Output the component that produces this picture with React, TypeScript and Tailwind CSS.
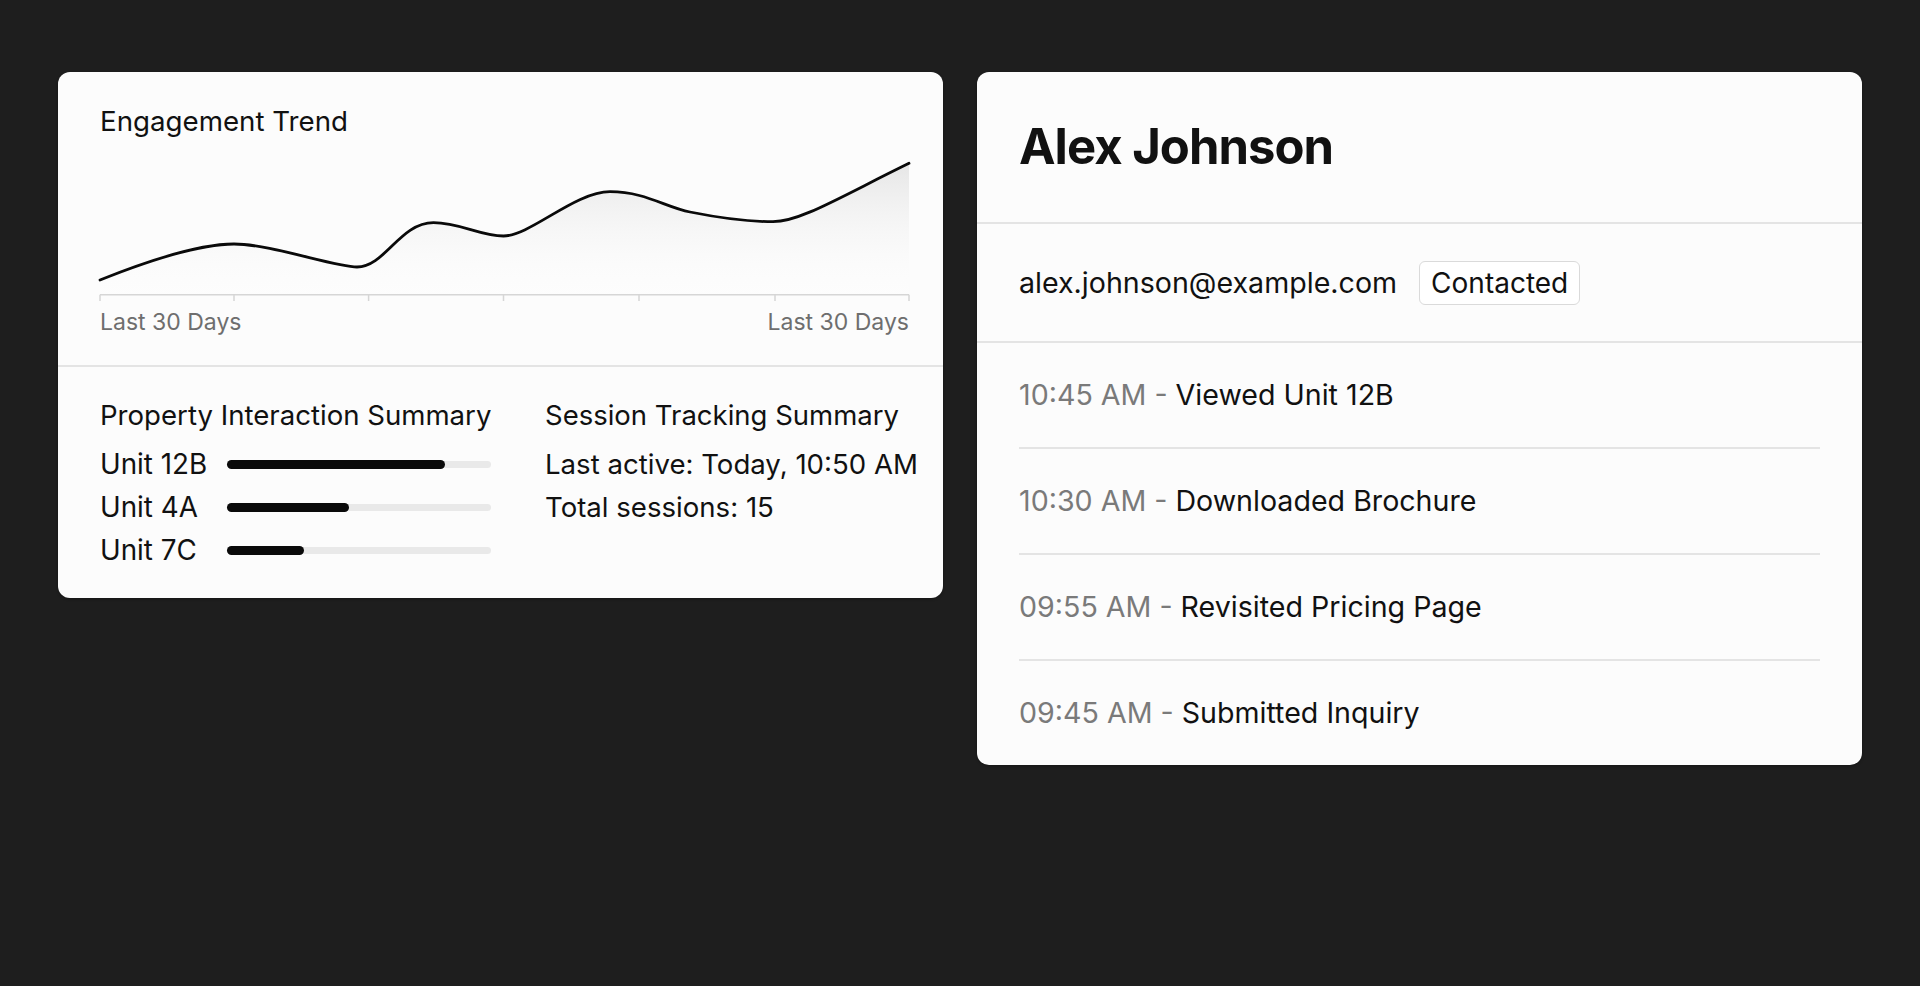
import React from "react";

const linePath =
  "M0,143 C45,125 100,107 134,107 C170,107 235,130 257,130 C285,130 300,85.7 333.5,85.7 C360,85.7 380,99 403.5,99 C430,99 475,54.7 510,54.7 C545,54.7 565,70 590,75 C625,82 650,84.7 673,84.7 C700,84.7 740,60 809,26.3";

const ticks = [0, 134, 268.6, 403.5, 539, 675, 809];

function Chart() {
  return (
    <svg width="809" height="164" viewBox="0 0 809 164" className="block overflow-visible">
      <defs>
        <linearGradient id="fillGrad" x1="0" y1="0" x2="0" y2="1">
          <stop offset="0%" stopColor="#e6e6e6" stopOpacity="1" />
          <stop offset="100%" stopColor="#ffffff" stopOpacity="0.2" />
        </linearGradient>
      </defs>
      <path d={linePath + " L809,157.7 L0,157.7 Z"} fill="url(#fillGrad)" />
      <line x1="0" y1="157.7" x2="809" y2="157.7" stroke="#d6d6d6" strokeWidth="1.5" />
      {ticks.map((t) => (
        <line key={t} x1={t} y1="157.7" x2={t} y2="164" stroke="#d6d6d6" strokeWidth="1.5" />
      ))}
      <path d={linePath} fill="none" stroke="#0a0a0a" strokeWidth="2.8" strokeLinecap="round" strokeLinejoin="round" />
    </svg>
  );
}

const units = [
  { name: "Unit 12B", w: 218 },
  { name: "Unit 4A", w: 122 },
  { name: "Unit 7C", w: 77 },
];

const events = [
  { t: "10:45 AM", a: "Viewed Unit 12B" },
  { t: "10:30 AM", a: "Downloaded Brochure" },
  { t: "09:55 AM", a: "Revisited Pricing Page" },
  { t: "09:45 AM", a: "Submitted Inquiry" },
];

export default function App() {
  return (
    <div
      className="min-h-[986px] w-full bg-[#1e1e1e] flex items-start gap-[34px] px-[58px] pt-[72px] text-[#111111]"
      style={{ fontFamily: "Inter, 'Noto Sans', sans-serif" }}
    >
      {/* Left card */}
      <div className="flex-1 bg-[#fcfcfc] rounded-[12px] overflow-hidden shadow-[0_1px_3px_rgba(0,0,0,0.3)]">
        <div className="pl-[42px] pr-[34px] pt-[33px] pb-[28px] border-b-2 border-[#e4e4e4]">
          <div className="text-[27.7px] leading-[32px]">Engagement Trend</div>
          <Chart />
          <div className="mt-[6px] flex justify-between text-[23px] leading-[30px] text-[#6e6e6e] w-[809px]">
            <span>Last 30 Days</span>
            <span>Last 30 Days</span>
          </div>
        </div>
        <div className="pl-[42px] pr-[34px] pt-[30px] pb-[26px] flex gap-[54px]">
          <div className="w-[391px] shrink-0">
            <div className="text-[27.6px] leading-[36px] whitespace-nowrap">Property Interaction Summary</div>
            <div className="mt-[10px]">
              {units.map((u) => (
                <div key={u.name} className="h-[43px] flex items-center">
                  <span className="w-[127px] text-[27.8px] leading-[43px] whitespace-nowrap">{u.name}</span>
                  <div className="w-[264px] h-[7px] rounded-full bg-[#e9e9e9] flex items-center">
                    <div className="h-[9px] rounded-full bg-[#0a0a0a]" style={{ width: u.w }} />
                  </div>
                </div>
              ))}
            </div>
          </div>
          <div className="whitespace-nowrap">
            <div className="text-[27.5px] leading-[36px]">Session Tracking Summary</div>
            <div className="mt-[10px] text-[27.6px]">
              <div className="h-[43px] leading-[43px]">Last active: Today, 10:50 AM</div>
              <div className="h-[43px] leading-[43px]">Total sessions: 15</div>
            </div>
          </div>
        </div>
      </div>

      {/* Right card */}
      <div className="flex-1 bg-[#fcfcfc] rounded-[12px] overflow-hidden shadow-[0_1px_3px_rgba(0,0,0,0.3)]">
        <div className="h-[152px] px-[42px] flex items-center border-b-2 border-[#e4e4e4]">
          <h1 className="text-[49px] leading-[56px] font-bold tracking-[-0.02em]">Alex Johnson</h1>
        </div>
        <div className="h-[119px] px-[42px] flex items-center gap-[22px] border-b-2 border-[#e4e4e4]">
          <span className="text-[28.6px] leading-[36px]">alex.johnson@example.com</span>
          <span className="h-[44px] px-[11px] flex items-center text-[28px] border border-[#dadada] rounded-[6px] bg-white">
            Contacted
          </span>
        </div>
        <div className="px-[42px]">
          {events.map((e, i) => (
            <div
              key={e.t}
              className={
                "flex items-center text-[28.6px] leading-[36px] whitespace-pre " +
                (i < events.length - 1 ? "h-[106px] border-b-2 border-[#e4e4e4]" : "h-[104px]")
              }
            >
              <span className="text-[#7a7a7a]">{e.t + " - "}</span>
              <span>{e.a}</span>
            </div>
          ))}
        </div>
      </div>
    </div>
  );
}
